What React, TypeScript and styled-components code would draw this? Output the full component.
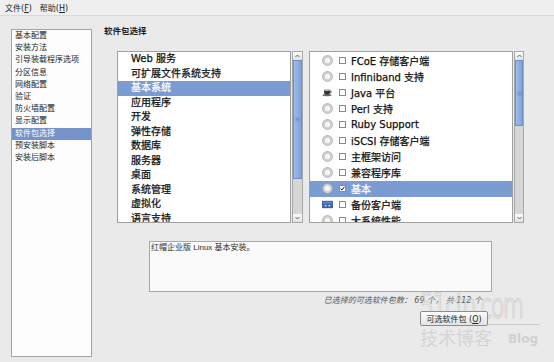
import styled, { createGlobalStyle } from 'styled-components'

const GlobalStyle = createGlobalStyle`
  *, *::before, *::after { box-sizing: border-box; }
  html, body { margin: 0; padding: 0; }
  body {
    background: #eaeaea;
    font-family: "DejaVu Sans", "Noto Sans CJK SC", sans-serif;
    color: #1e1e1e;
  }
`

const Window = styled.div`
  position: relative;
  width: 554px;
  height: 362px;
  overflow: hidden;
  display: flex;
  flex-direction: column;
  background: #eaeaea;
`

const MenuBar = styled.div`
  height: 16px;
  display: flex;
  align-items: center;
  gap: 8px;
  padding-left: 5px;
  font-size: 8px;
  background: #efefef;
  border-bottom: 1px solid #dadada;
`

const MenuItem = styled.span`
  color: #222;
`

const Body = styled.div`
  flex: 1;
  display: flex;
  min-height: 0;
`

const Sidebar = styled.ul`
  list-style: none;
  margin: 13px 0 5px 11px;
  padding: 0;
  width: 81px;
  border: 1px solid #a3a3a3;
  background: #fdfdfd;
  font-size: 8px;
`

const NavItem = styled.li<{ $active?: boolean }>`
  height: 12.2px;
  line-height: 12.2px;
  padding-left: 3px;
  white-space: nowrap;
  background: ${(p) => (p.$active ? '#7592c9' : 'transparent')};
  color: ${(p) => (p.$active ? '#fff' : '#222')};
`

const Main = styled.main`
  flex: 1;
  display: flex;
  flex-direction: column;
  padding: 10px 0 0 12px;
`

const Title = styled.h2`
  margin: 0;
  font-size: 8.5px;
  line-height: 11px;
  font-weight: bold;
`

const Lists = styled.div`
  display: flex;
  gap: 6px;
  margin: 14px 0 0 13px;
`

const ListFrame = styled.div<{ $width: number }>`
  display: flex;
  gap: 1px;
  width: ${(p) => p.$width}px;
  height: 172px;
`

const ListBody = styled.ul`
  flex: 1;
  margin: 0;
  padding: 0;
  list-style: none;
  background: #fff;
  border: 1px solid #a0a0a0;
  overflow: hidden;
  -webkit-text-stroke: 0.25px currentColor;
`

const GroupRow = styled.li<{ $active?: boolean }>`
  height: 14.5px;
  line-height: 14.5px;
  padding-left: 13px;
  font-size: 10px;
  white-space: nowrap;
  background: ${(p) => (p.$active ? '#7a9cd3' : 'transparent')};
  color: ${(p) => (p.$active ? '#fff' : '#111')};
`

const PackageRow = styled.li<{ $active?: boolean }>`
  height: 16.1px;
  display: flex;
  align-items: center;
  padding-left: 12px;
  font-size: 10px;
  white-space: nowrap;
  background: ${(p) => (p.$active ? '#7a9cd3' : 'transparent')};
  color: ${(p) => (p.$active ? '#fff' : '#111')};
`

const IconSlot = styled.span`
  width: 11px;
  height: 11px;
  display: flex;
  align-items: center;
  justify-content: center;
  margin-right: 6px;
`

const Check = styled.span`
  width: 7px;
  height: 7px;
  border: 1px solid #8a8a8a;
  background: #fff;
  margin-right: 5px;
  display: flex;
  align-items: center;
  justify-content: center;
`

const Scrollbar = styled.div<{ $width: number }>`
  width: ${(p) => p.$width}px;
  display: flex;
  flex-direction: column;
  border: 1px solid #a8a8a8;
  background: #d6d6d6;
`

const ScrollButton = styled.div`
  height: 8px;
  background: linear-gradient(#fbfbfb, #e2e2e2);
  display: flex;
  align-items: center;
  justify-content: center;
`

const Thumb = styled.div`
  background: linear-gradient(90deg, #9dbcea, #7fa3dc);
  border: 1px solid #6e90c8;
  display: flex;
  align-items: center;
  justify-content: center;
`

const Track = styled.div`
  flex: 1;
`

const Description = styled.div`
  margin: 18px 0 0 45px;
  width: 343px;
  height: 51px;
  border: 1px solid #a8a8a8;
  background: #fafafa;
  font-family: "Liberation Sans", "Noto Sans CJK SC", sans-serif;
  font-size: 8px;
  line-height: 12px;
  padding: 0 1px;
  color: #2a2a2a;
`

const Footer = styled.div`
  width: 343px;
  margin-left: 45px;
  display: flex;
  flex-direction: column;
  align-items: flex-end;
`

const Count = styled.div`
  margin: 4px 10px 0 0;
  font-size: 8px;
  line-height: 10px;
  font-style: italic;
  color: #555;
`

const OptionButton = styled.button`
  position: relative;
  z-index: 1;
  margin: 5px 4px 0 0;
  width: 68px;
  height: 15px;
  padding: 0;
  font-family: "DejaVu Sans", "Noto Sans CJK SC", sans-serif;
  font-size: 8px;
  color: #222;
  border: 1px solid #8c8c8c;
  border-radius: 2px;
  background: linear-gradient(#fcfcfc, #e4e4e4);
`

const Watermark = styled.div`
  position: absolute;
  left: 420px;
  top: 288px;
  pointer-events: none;
  display: grid;
  grid-template-columns: auto auto;
  column-gap: 14px;
  align-items: end;
`

const MarkDomain = styled.span`
  grid-column: 1 / 3;
  display: block;
  width: 120px;
  height: 36px;
  overflow: visible;
  font-family: "DejaVu Sans", sans-serif;
  font-size: 36px;
  line-height: 36px;
  letter-spacing: -2px;
  color: rgba(210, 210, 210, 0.4);
  -webkit-text-stroke: 0.6px rgba(160, 160, 160, 0.45);
  transform: scaleX(0.6);
  transform-origin: left;
  white-space: nowrap;
`

const MarkRule = styled.span`
  grid-column: 1 / 3;
  height: 1px;
  width: 120px;
  background: rgba(170, 170, 170, 0.5);
`

const MarkCn = styled.span`
  font-family: "Noto Sans CJK SC", sans-serif;
  font-size: 18px;
  line-height: 24px;
  color: rgba(190, 190, 190, 0.5);
`

const MarkBlog = styled.span`
  font-family: "DejaVu Sans", sans-serif;
  font-weight: bold;
  font-size: 12px;
  line-height: 20px;
  color: rgba(190, 190, 190, 0.6);
`

const navItems = [
  '基本配置',
  '安装方法',
  '引导装载程序选项',
  '分区信息',
  '网络配置',
  '验证',
  '防火墙配置',
  '显示配置',
  '软件包选择',
  '预安装脚本',
  '安装后脚本',
]

const groups = [
  'Web 服务',
  '可扩展文件系统支持',
  '基本系统',
  '应用程序',
  '开发',
  '弹性存储',
  '数据库',
  '服务器',
  '桌面',
  '系统管理',
  '虚拟化',
  '语言支持',
]

type Pkg = { name: string; icon: 'ring' | 'java' | 'backup'; checked?: boolean }

const packages: Pkg[] = [
  { name: 'FCoE 存储客户端', icon: 'ring' },
  { name: 'Infiniband 支持', icon: 'ring' },
  { name: 'Java 平台', icon: 'java' },
  { name: 'Perl 支持', icon: 'ring' },
  { name: 'Ruby Support', icon: 'ring' },
  { name: 'iSCSI 存储客户端', icon: 'ring' },
  { name: '主框架访问', icon: 'ring' },
  { name: '兼容程序库', icon: 'ring' },
  { name: '基本', icon: 'ring', checked: true },
  { name: '备份客户端', icon: 'backup' },
  { name: '大系统性能', icon: 'ring' },
]

const PkgIcon = ({ kind }: { kind: Pkg['icon'] }) => {
  if (kind === 'java')
    return (
      <svg width="12" height="10" viewBox="0 0 12 10">
        <ellipse cx="5.5" cy="8.4" rx="5" ry="1.3" fill="#6a6a6a" />
        <path d="M2.2 3.2h6.6v1.4a3.3 3.1 0 0 1-6.6 0z" fill="#333" />
        <path d="M8.8 3.8a1.3 1.1 0 0 1 0 2.2" stroke="#333" strokeWidth="0.9" fill="none" />
        <ellipse cx="5.5" cy="3.2" rx="3.3" ry="0.8" fill="#e6e6e6" stroke="#444" strokeWidth="0.4" />
      </svg>
    )
  if (kind === 'backup')
    return (
      <svg width="12" height="9" viewBox="0 0 12 9">
        <rect x="0" y="0.5" width="12" height="8" fill="#3c64a6" />
        <rect x="1" y="1.5" width="10" height="2" fill="#5d86c6" />
        <rect x="3" y="5" width="2" height="1.5" fill="#dfe8f6" />
        <rect x="7" y="5" width="2" height="1.5" fill="#dfe8f6" />
      </svg>
    )
  return (
    <svg width="11" height="11" viewBox="0 0 11 11">
      <circle cx="5.5" cy="5.5" r="5" fill="#d2d2d2" stroke="#9c9c9c" strokeWidth="0.6" />
      <circle cx="5.5" cy="5.5" r="3.2" fill="#f6f6f6" stroke="#b4b4b4" strokeWidth="0.5" />
    </svg>
  )
}

const Arrow = ({ up }: { up?: boolean }) => (
  <svg width="5" height="4" viewBox="0 0 5 4">
    <path d={up ? 'M0.5 3L2.5 1L4.5 3' : 'M0.5 1L2.5 3L4.5 1'} stroke="#555" strokeWidth="0.9" fill="none" />
  </svg>
)

const Grip = () => (
  <svg width="5" height="5" viewBox="0 0 5 5">
    <path d="M0.5 1h4M0.5 2.5h4M0.5 4h4" stroke="#5c7fb8" strokeWidth="0.6" />
  </svg>
)

const VScroll = ({ width, thumb }: { width: number; thumb: number }) => (
  <Scrollbar $width={width}>
    <ScrollButton>
      <Arrow up />
    </ScrollButton>
    <Thumb style={{ height: thumb }}>
      <Grip />
    </Thumb>
    <Track />
    <ScrollButton>
      <Arrow />
    </ScrollButton>
  </Scrollbar>
)

const App = () => {
  return (
    <Window>
      <GlobalStyle />
      <MenuBar>
        <MenuItem>
          文件(<u>F</u>)
        </MenuItem>
        <MenuItem>
          帮助(<u>H</u>)
        </MenuItem>
      </MenuBar>
      <Body>
        <Sidebar>
          {navItems.map((n) => (
            <NavItem key={n} $active={n === '软件包选择'}>
              {n}
            </NavItem>
          ))}
        </Sidebar>
        <Main>
          <Title>软件包选择</Title>
          <Lists>
            <ListFrame $width={186}>
              <ListBody>
                {groups.map((g) => (
                  <GroupRow key={g} $active={g === '基本系统'}>
                    {g}
                  </GroupRow>
                ))}
              </ListBody>
              <VScroll width={11} thumb={119} />
            </ListFrame>
            <ListFrame $width={215}>
              <ListBody>
                {packages.map((p) => (
                  <PackageRow key={p.name} $active={p.checked}>
                    <IconSlot>
                      <PkgIcon kind={p.icon} />
                    </IconSlot>
                    <Check>
                      {p.checked && (
                        <svg width="5" height="5" viewBox="0 0 5 5">
                          <path d="M0.6 2.6L2 4L4.4 0.8" stroke="#111" strokeWidth="1" fill="none" />
                        </svg>
                      )}
                    </Check>
                    {p.name}
                  </PackageRow>
                ))}
              </ListBody>
              <VScroll width={10} thumb={66} />
            </ListFrame>
          </Lists>
          <Description>红帽企业版 Linux 基本安装。</Description>
          <Footer>
            <Count>已选择的可选软件包数： 69 个， 共 112 个</Count>
            <OptionButton>
              可选软件包 (<u>O</u>)
            </OptionButton>
          </Footer>
        </Main>
      </Body>
      <Watermark>
        <MarkDomain>51cto.com</MarkDomain>
        <MarkRule />
        <MarkCn>技术博客</MarkCn>
        <MarkBlog>Blog</MarkBlog>
      </Watermark>
    </Window>
  )
}

export default App
